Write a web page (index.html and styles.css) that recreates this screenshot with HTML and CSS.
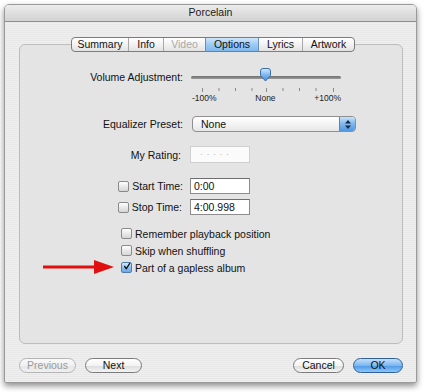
FILE: index.html
```html
<!DOCTYPE html>
<html>
<head>
<meta charset="utf-8">
<link rel="stylesheet" href="styles.css">
</head>
<body>
<div class="page">
  <div class="window">
    <div class="titlebar">Porcelain</div>
    <div class="content">
      <div class="tabs">
        <div class="tab t-summary">Summary</div>
        <div class="tab t-info">Info</div>
        <div class="tab t-video disabled">Video</div>
        <div class="tab t-options selected">Options</div>
        <div class="tab t-lyrics">Lyrics</div>
        <div class="tab t-artwork">Artwork</div>
      </div>
      <div class="group">
        <div class="row row-volume">
          <div class="label">Volume Adjustment:</div>
          <div class="slider">
            <div class="track"></div>
            <svg class="thumb" width="13" height="14" viewBox="0 0 13 14">
              <defs>
                <linearGradient id="tg" x1="0" y1="0" x2="0" y2="1">
                  <stop offset="0" stop-color="#d6ebff"/>
                  <stop offset="0.5" stop-color="#7fb8f0"/>
                  <stop offset="1" stop-color="#3e8fe0"/>
                </linearGradient>
              </defs>
              <path d="M1.5,3 Q1.5,0.5 4,0.5 H9 Q11.5,0.5 11.5,3 V7.5 L6.5,13 L1.5,7.5 Z" fill="url(#tg)" stroke="#3a6fa8" stroke-width="1"/>
            </svg>
          </div>
        </div>
        <div class="row row-ticks">
          <div class="label"></div>
          <div class="ticks">
            <svg class="tickmarks" width="150" height="4" viewBox="0 0 150 4">
              <g stroke="#8a8a8a" stroke-width="1">
                <line x1="11.5" y1="0" x2="11.5" y2="4"/>
                <line x1="28" y1="0" x2="28" y2="3"/>
                <line x1="44.5" y1="0" x2="44.5" y2="3"/>
                <line x1="61" y1="0" x2="61" y2="3"/>
                <line x1="75.5" y1="0" x2="75.5" y2="4"/>
                <line x1="92" y1="0" x2="92" y2="3"/>
                <line x1="108.5" y1="0" x2="108.5" y2="3"/>
                <line x1="125" y1="0" x2="125" y2="3"/>
                <line x1="142.5" y1="0" x2="142.5" y2="4"/>
              </g>
            </svg>
            <div class="ticklabels">
              <span>-100%</span><span>None</span><span>+100%</span>
            </div>
          </div>
        </div>
        <div class="row row-eq">
          <div class="label">Equalizer Preset:</div>
          <div class="popup">
            <span class="popup-text">None</span>
            <span class="popup-btn">
              <svg width="8" height="11" viewBox="0 0 8 11">
                <path d="M4,1 L7,4.5 H1 Z M4,10 L7,6.5 H1 Z" fill="#1a2a44"/>
              </svg>
            </span>
          </div>
        </div>
        <div class="row row-rating">
          <div class="label">My Rating:</div>
          <div class="rating">·&nbsp;·&nbsp;·&nbsp;·&nbsp;·</div>
        </div>
        <div class="row row-start">
          <div class="label"><span class="cb"></span>Start Time:</div>
          <div class="field">0:00</div>
        </div>
        <div class="row row-stop">
          <div class="label"><span class="cb"></span>Stop Time:</div>
          <div class="field">4:00.998</div>
        </div>
        <div class="checks">
          <div class="check"><span class="cb"></span>Remember playback position</div>
          <div class="check"><span class="cb"></span>Skip when shuffling</div>
          <div class="check"><span class="cb checked">
            <svg width="11" height="11" viewBox="0 0 11 11"><path d="M2.2,5.3 L4.6,8.6 L9.2,1.2" fill="none" stroke="#111" stroke-width="1.8" stroke-linecap="round" stroke-linejoin="round"/></svg>
          </span>Part of a gapless album</div>
        </div>
      </div>
      <div class="buttons">
        <div class="btn disabled b-prev">Previous</div>
        <div class="btn b-next">Next</div>
        <div class="spacer"></div>
        <div class="btn b-cancel">Cancel</div>
        <div class="btn default b-ok">OK</div>
      </div>
    </div>
  </div>
  <svg class="arrow" width="76" height="18" viewBox="0 0 76 18">
    <rect x="3" y="7.5" width="56" height="3" fill="#e01010"/>
    <path d="M54,2 L74,9 L54,16 Z" fill="#e01010"/>
  </svg>
</div>
</body>
</html>
```

FILE: styles.css
```css
html, body {
  margin: 0;
  padding: 0;
  background: #ffffff;
}
body {
  font-family: "Liberation Sans", Arial, sans-serif;
  font-size: 10.5px;
  color: #111;
}
.page {
  position: relative;
  width: 424px;
  height: 392px;
  padding: 4px 0 0 4px;
  box-sizing: border-box;
}
.window {
  width: 413px;
  height: 379px;
  border-radius: 5px 5px 2px 2px;
  border: 1px solid #9a9a9a;
  box-sizing: border-box;
  background: repeating-linear-gradient(#efefef 0px, #efefef 1px, #e8e8e8 1px, #e8e8e8 2px);
  box-shadow: 0 3px 6px rgba(0,0,0,0.45);
  display: flex;
  flex-direction: column;
  overflow: hidden;
}
.titlebar {
  height: 16px;
  line-height: 15px;
  text-align: center;
  font-size: 10.5px;
  color: #1a1a1a;
  background: linear-gradient(#ececec, #d2d2d2);
  border-bottom: 1px solid #8e8e8e;
  flex: none;
}
.content {
  padding: 15px 13px 0 14px;
  display: flex;
  flex-direction: column;
}
.tabs {
  align-self: center;
  margin-left: 4px;
  display: flex;
  height: 15px;
  border: 1px solid #7d7d7d;
  border-radius: 4px;
  background: linear-gradient(#ffffff, #f2f2f2 50%, #e2e2e2);
  box-sizing: border-box;
  position: relative;
  z-index: 1;
  overflow: hidden;
}
.tab {
  line-height: 13px;
  text-align: center;
  border-left: 1px solid #a8a8a8;
  color: #111;
}
.tab:first-child { border-left: none; }
.t-summary { width: 56px; }
.t-info { width: 34px; }
.t-video { width: 41px; }
.t-options { width: 52px; }
.t-lyrics { width: 43px; }
.t-artwork { width: 51px; }
.tab.disabled { color: #a8a8a8; }
.tab.selected {
  background: linear-gradient(#cfe6fb, #9ccbf4 50%, #7fb8ee);
  border-left-color: #6d8fb5;
  border-right: 1px solid #6d8fb5;
}
.t-lyrics { border-left: none; }
.group {
  margin-top: -8px;
  height: 300px;
  border: 1px solid #bcbcbc;
  border-radius: 6px;
  background: #e4e4e4;
  box-sizing: border-box;
  position: relative;
  padding-top: 25px;
}
.row {
  display: grid;
  grid-template-columns: 163px auto;
  column-gap: 8px;
  align-items: center;
}
.label {
  text-align: right;
  display: flex;
  justify-content: flex-end;
  align-items: center;
  white-space: nowrap;
}
.row-volume { height: 14px; }
.slider {
  position: relative;
  width: 150px;
  height: 14px;
}
.track {
  position: absolute;
  left: 0;
  right: 0;
  top: 6px;
  height: 3px;
  border-radius: 2px;
  background: linear-gradient(#6f6f6f, #9a9a9a);
}
.thumb {
  position: absolute;
  left: 68px;
  top: -2px;
}
.row-ticks { height: 20px; align-items: start; }
.ticks {
  padding-top: 4px;
  width: 150px;
}
.tickmarks { display: block; }
.ticklabels {
  display: flex;
  justify-content: space-between;
  font-size: 8.5px;
  line-height: 10px;
  margin-top: 1px;
  color: #222;
  padding-left: 1px;
}
.row-eq { margin-top: 12px; height: 16px; }
.popup {
  margin-left: 1px;
  width: 164px;
  height: 16px;
  box-sizing: border-box;
  border: 1px solid #8f8f8f;
  border-radius: 4px;
  background: linear-gradient(#ffffff, #f4f4f4 50%, #e6e6e6);
  display: flex;
  align-items: center;
  overflow: hidden;
}
.popup-text { flex: 1; padding-left: 8px; }
.popup-btn {
  width: 15px;
  height: 14px;
  background: linear-gradient(#c7e1fa, #7eb5ec 50%, #4f98e2);
  border-left: 1px solid #5a86b5;
  display: flex;
  align-items: center;
  justify-content: center;
}
.popup-btn svg { display: block; }
.row-rating { margin-top: 14px; height: 17px; }
.row-rating .label { padding-right: 2px; }
.rating {
  margin-left: -1px;
  width: 60px;
  height: 17px;
  box-sizing: border-box;
  border: 1px solid #cfcfcf;
  background: #fbfbfb;
  color: #b5b5b5;
  font-size: 9px;
  line-height: 15px;
  padding-left: 9px;
  letter-spacing: 0.5px;
}
.row-start { margin-top: 15px; height: 16px; }
.row-stop { margin-top: 5px; height: 16px; }
.row-stop .label { padding-right: 1px; }
.field {
  margin-left: -1px;
  width: 60px;
  height: 16px;
  box-sizing: border-box;
  border: 1px solid #8d8d8d;
  border-top-color: #6e6e6e;
  background: #ffffff;
  line-height: 14px;
  padding-left: 3px;
}
.cb {
  display: inline-flex;
  align-items: center;
  justify-content: center;
  width: 11px;
  height: 11px;
  box-sizing: border-box;
  border: 1px solid #8a8a8a;
  border-radius: 2px;
  background: linear-gradient(#ffffff, #e9e9e9 50%, #d6d6d6);
  margin-right: 3px;
  flex: none;
}
.cb.checked {
  background: linear-gradient(#d8ebfd, #8fc0f0 50%, #6aa7e8);
  border-color: #4f7eae;
  overflow: visible;
}
.cb.checked svg { display: block; margin-top: -2px; margin-left: 1px; }
.checks {
  margin-top: 10px;
  padding-left: 101px;
  display: flex;
  flex-direction: column;
}
.check {
  height: 17px;
  display: flex;
  align-items: center;
}
.buttons {
  margin-top: 13px;
  display: flex;
  align-items: center;
  height: 16px;
}
.spacer { flex: 1; }
.btn {
  height: 15px;
  box-sizing: border-box;
  border: 1px solid #7a7a7a;
  border-radius: 8px;
  background: linear-gradient(#ffffff, #f3f3f3 50%, #dcdcdc 51%, #f4f4f4);
  text-align: center;
  line-height: 13px;
  color: #111;
}
.b-prev { width: 57px; }
.b-next { width: 57px; margin-left: 9px; }
.b-cancel { width: 51px; }
.b-ok { width: 50px; margin-left: 9px; }
.btn.disabled {
  color: #9a9a9a;
  border-color: #b4b4b4;
  background: linear-gradient(#fafafa, #f0f0f0 50%, #e6e6e6 51%, #f0f0f0);
}
.btn.default {
  border-color: #2f5f96;
  background: linear-gradient(#c4dffb, #7db7f0 50%, #4d97e4 51%, #8cc6fb);
}
.arrow {
  position: absolute;
  left: 40px;
  top: 258px;
}
```
